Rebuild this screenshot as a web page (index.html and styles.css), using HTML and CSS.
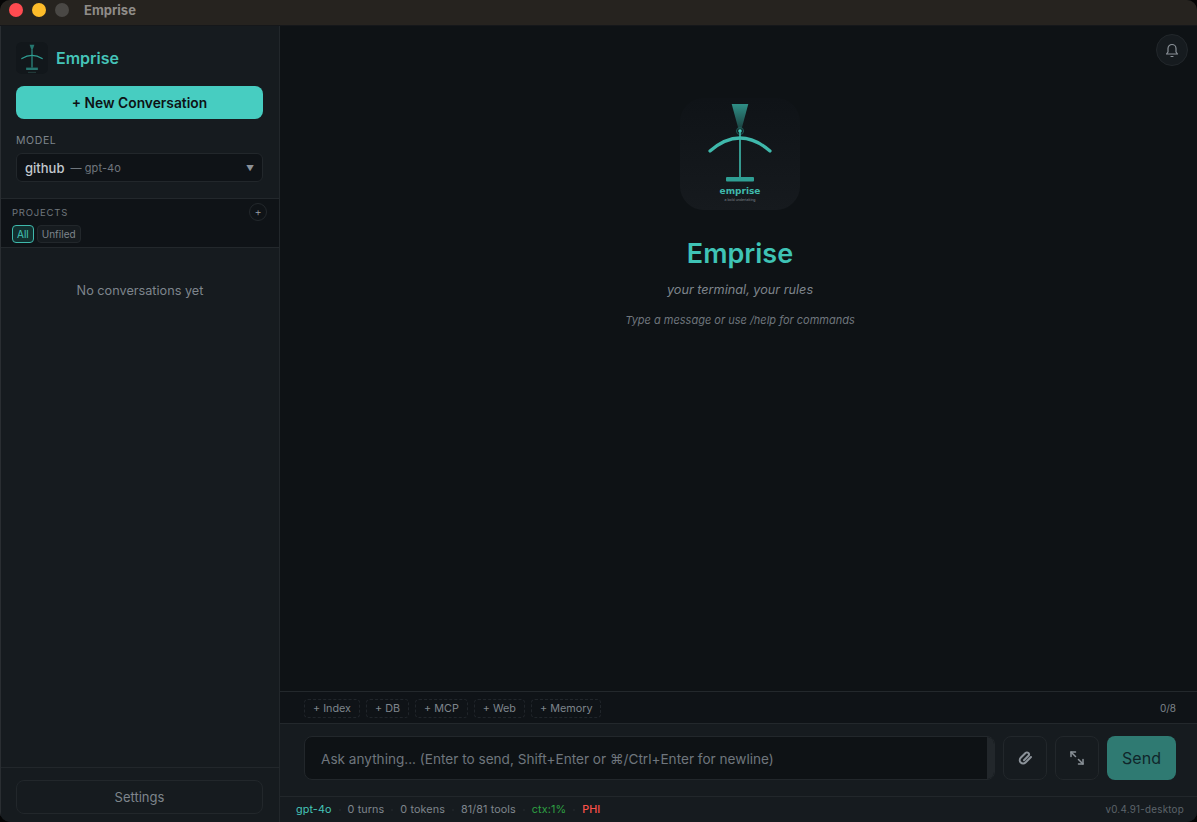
FILE: index.html
```html
<!DOCTYPE html>
<html lang="en">
<head>
<meta charset="UTF-8">
<meta name="viewport" content="width=device-width,initial-scale=1">
<title>Emprise</title>
<link rel="stylesheet" href="styles.css">
</head>
<body>
<div class="window">
<div class="titlebar">
<span class="light light-red"></span>
<span class="light light-yellow"></span>
<span class="light light-off"></span>
<span class="window-title">Emprise</span>
</div>
<div class="app">
<aside class="sidebar">
<div class="side-top">
<div class="brand">
<svg class="brand-logo" viewBox="0 0 120 120" aria-hidden="true">
<rect width="120" height="120" rx="22" fill="#12171b"/>
<polygon points="51,10 69,10 62,30 58,30" fill="#25766f"/>
<path d="M22 62Q60 38 98 62" fill="none" stroke="#2f9f94" stroke-width="5" stroke-linecap="round"/>
<rect x="58" y="30" width="4" height="66" fill="#2f9f94"/>
<rect x="38" y="96" width="44" height="9" fill="#25766f"/>
<rect x="45" y="112" width="30" height="3" fill="#2a4a48"/>
</svg>
<span class="brand-name">Emprise</span>
</div>
<button class="new-btn">+ New Conversation</button>
<div class="model-label">MODEL</div>
<div class="model-select">
<span class="model-provider">github</span>
<span class="model-name">— gpt-4o</span>
<span class="model-caret">▼</span>
</div>
</div>
<div class="projects">
<div class="projects-head">
<span class="projects-title">PROJECTS</span>
<span class="projects-add">+</span>
</div>
<div class="project-tabs">
<span class="project-tab project-tab-on">All</span>
<span class="project-tab">Unfiled</span>
</div>
</div>
<div class="conversations">
<p class="conversations-empty">No conversations yet</p>
</div>
<div class="side-foot">
<button class="settings-btn">Settings</button>
</div>
</aside>
<main class="main">
<button class="bell" aria-label="Notifications">
<svg viewBox="0 0 16 16" width="16" height="16" fill="none" stroke="#8b9299" stroke-width="1.200" stroke-linejoin="round" stroke-linecap="round"><path d="M4 10V6.500a4 4 0 0 1 8 0V10l1.500 2h-11z"/><path d="M7 14.500h2"/></svg>
</button>
<div class="welcome">
<svg class="welcome-logo" viewBox="0 0 120 112" role="img" aria-label="Emprise logo">
<defs>
<linearGradient id="beam" x1="0" y1="0" x2="0" y2="1"><stop offset="0" stop-color="#2f8f86"/><stop offset="1" stop-color="#1a3a3a"/></linearGradient>
<linearGradient id="tile" x1="0" y1="0" x2="0" y2="1"><stop offset="0" stop-color="#0f1317"/><stop offset="1" stop-color="#161a1e"/></linearGradient>
</defs>
<rect width="120" height="112" rx="24" fill="url(#tile)"/>
<polygon points="51.700,6 68.300,6 61,33 59,33" fill="url(#beam)"/>
<circle cx="60" cy="33" r="3.500" fill="none" stroke="#1f5f5a" stroke-width="1"/>
<circle cx="60" cy="33" r="1.800" fill="#45c9bb"/>
<path d="M30 53Q60 27 90 53" fill="none" stroke="#3fb8ab" stroke-width="3.200" stroke-linecap="round"/>
<rect x="59.200" y="33" width="1.600" height="47" fill="#3fb8ab"/>
<rect x="46" y="79" width="28" height="4.500" rx="1" fill="#2f9f94"/>
<text class="logo-word" x="60" y="96" text-anchor="middle">emprise</text>
<text class="logo-tag" x="60" y="102.700" text-anchor="middle">a bold undertaking</text>
</svg>
<h1 class="welcome-title">Emprise</h1>
<p class="welcome-tagline">your terminal, your rules</p>
<p class="welcome-hint">Type a message or use /help for commands</p>
</div>
<div class="context-bar">
<span class="context-chip">+ Index</span>
<span class="context-chip">+ DB</span>
<span class="context-chip">+ MCP</span>
<span class="context-chip">+ Web</span>
<span class="context-chip">+ Memory</span>
<span class="context-count">0/8</span>
</div>
<div class="composer">
<div class="composer-input">
<span class="composer-placeholder">Ask anything... (Enter to send, Shift+Enter or ⌘/Ctrl+Enter for newline)</span>
<span class="composer-scroll"></span>
</div>
<button class="icon-btn" aria-label="Attach">
<svg viewBox="0 0 14 14" width="14" height="14" fill="none" stroke="#8b9299" stroke-width="2" stroke-linecap="round" stroke-linejoin="round"><path d="M13 6L7.500 11.500a3.300 3.300 0 0 1-4.800-4.700L7.500 2a2 2 0 0 1 2.900 2.800L6 9.300"/></svg>
</button>
<button class="icon-btn" aria-label="Expand">
<svg viewBox="0 0 14 14" width="14" height="14" fill="none" stroke="#8b9299" stroke-width="1.500" stroke-linecap="round" stroke-linejoin="round"><path d="M1 5.500V1h4.500"/><path d="M1 1l4.500 4.500"/><path d="M13 8.500V13H8.500"/><path d="M13 13L8.500 8.500"/></svg>
</button>
<button class="send-btn">Send</button>
</div>
<div class="statusbar">
<span class="stat stat-model">gpt-4o</span>
<span class="stat">0 turns</span>
<span class="stat">0 tokens</span>
<span class="stat">81/81 tools</span>
<span class="stat stat-ctx">ctx:1%</span>
<span class="stat stat-phi">PHI</span>
<span class="stat-version">v0.4.91-desktop</span>
</div>
</main>
</div>
</div>
</body>
</html>
```

FILE: styles.css
```css
*{margin:0;padding:0;box-sizing:border-box}
html,body{height:100%;overflow:hidden}
body{font-family:Inter,"Noto Sans",sans-serif;background:#050505;color:#c9d1d9}
button{font-family:inherit;cursor:pointer}
.window{height:822px;display:flex;flex-direction:column;border-radius:10px;overflow:hidden;background:#0e1215}
.titlebar{height:26px;flex:none;background:#26231f;display:flex;align-items:center;padding:0 9px 5px;gap:9px;border-bottom:1px solid #15171a}
.light{width:14px;height:14px;border-radius:50%}
.light-red{background:#ff4b50}
.light-yellow{background:#fdbc2a}
.light-off{background:#4a4845}
.window-title{margin-left:6px;font-size:13px;font-weight:700;color:#8f8c88}
.app{flex:1;display:flex;min-height:0}
.sidebar{width:280px;flex:none;background:#161b1f;border-right:1px solid #22272b;border-left:1px solid #2a2e32;display:flex;flex-direction:column}
.side-top{padding:16px 16px 16px 15px;height:173px;border-bottom:1px solid #23282c}
.brand{display:flex;align-items:center;gap:8px;height:32px}
.brand-logo{width:32px;height:32px}
.brand-name{font-size:16px;font-weight:600;color:#45c4b8}
.new-btn{display:block;width:100%;height:33px;margin-top:12px;border:none;border-radius:8px;background:#47cdc1;color:#0e1215;font-size:13.800px;font-weight:600}
.model-label{margin-top:15px;font-size:10.500px;letter-spacing:.6px;color:#7e858c}
.model-select{margin-top:6px;height:29px;background:#0f1317;border:1px solid #22272b;border-radius:6px;display:flex;align-items:center;padding:0 8px}
.model-provider{font-size:13px;font-weight:500;color:#c3c9cf}
.model-name{margin-left:6px;font-size:11px;letter-spacing:.1px;color:#6f767d}
.model-caret{margin-left:auto;font-size:8px;color:#8b9299}
.projects{height:49px;background:#0f1317;border-bottom:1px solid #23282c;padding:4px 11px 0}
.projects-head{display:flex;align-items:center;justify-content:space-between;height:18px}
.projects-title{font-size:9.500px;letter-spacing:.8px;color:#6f767d}
.projects-add{width:18px;height:18px;margin-right:1px;border:1px solid #23282c;border-radius:50%;display:flex;align-items:center;justify-content:center;font-size:11px;font-weight:300;color:#9aa1a8}
.project-tabs{display:flex;gap:3px;margin-top:4px}
.project-tab{height:18px;padding:0 4px;display:flex;align-items:center;font-size:10px;color:#7e858c;background:#161b1f;border:1px solid #22272b;border-radius:4px}
.project-tab-on{color:#45c4b8;background:#12302f;border-color:#3fb8ab}
.conversations{flex:1}
.conversations-empty{margin-top:35px;text-align:center;font-size:12.700px;color:#7e858c}
.side-foot{height:55px;border-top:1px solid #22272b;padding:12px 16px 0 15px}
.settings-btn{display:block;width:100%;height:34px;background:transparent;border:1px solid #22272b;border-radius:8px;color:#7e858c;font-size:13px}
.main{flex:1;min-width:0;position:relative;display:flex;flex-direction:column;background:#0e1215}
.bell{position:absolute;top:8px;right:9px;width:32px;height:32px;border-radius:50%;background:#161b1f;border:1px solid #22272b;display:flex;align-items:center;justify-content:center}
.welcome{flex:1;display:flex;flex-direction:column;align-items:center;padding:72px 0 0 3px}
.welcome-logo{width:120px;height:112px}
.logo-word{font-family:"DejaVu Sans",sans-serif;font-size:9px;font-weight:700;fill:#3fb8ab}
.logo-tag{font-family:Inter,sans-serif;font-size:3.500px;fill:#7e858c}
.welcome-title{margin-top:27px;font-size:27px;line-height:33px;font-weight:600;color:#3fc4b6}
.welcome-tagline{margin-top:12px;font-size:12.700px;font-style:italic;color:#7e858c}
.welcome-hint{margin-top:16px;font-size:11px;font-style:italic;color:#6f767d}
.context-bar{height:33px;flex:none;background:#0f1317;border-top:1px solid #23282c;border-bottom:1px solid #23282c;display:flex;align-items:center;gap:6px;padding:1px 21px 0 24px}
.context-chip{height:19px;padding:0 8px;display:flex;align-items:center;font-size:10.800px;color:#7e858c;border:1px dashed #20252a;border-radius:4px}
.context-count{margin-left:auto;font-size:10px;color:#7e858c}
.composer{height:72px;flex:none;background:#161b1f;display:flex;align-items:flex-start;gap:8px;padding:12px 21px 0 24px}
.composer-input{flex:1;height:44px;background:#0e1215;border:1px solid #22272b;border-radius:8px;display:flex;align-items:center;padding:1px 0 0 16px;position:relative;overflow:hidden}
.composer-placeholder{font-size:13.600px;color:#6f767d}
.composer-scroll{position:absolute;top:0;right:0;width:7px;height:100%;background:#22272b}
.icon-btn{width:44px;height:44px;background:#161b1f;border:1px solid #22272b;border-radius:8px;display:flex;align-items:center;justify-content:center}
.send-btn{width:69px;height:44px;border:none;border-radius:8px;background:#2f7a72;color:#10262a;font-size:16px}
.statusbar{height:26px;flex:none;background:#161b1f;border-top:1px solid #22272b;display:flex;align-items:center;gap:7px;padding:0 13px 0 16px}
.stat{display:flex;align-items:center;font-size:10.800px;letter-spacing:.1px;color:#7e858c}
.stat+.stat::before{content:"";width:2px;height:2px;margin-right:7px;border-radius:50%;background:#22272b}
.stat-model{color:#45c4b8}
.stat-ctx{color:#2ea043}
.stat-phi{color:#f85149;font-weight:500}
.stat-version{margin-left:auto;font-size:9.800px;letter-spacing:.25px;color:#5c636a}
```
